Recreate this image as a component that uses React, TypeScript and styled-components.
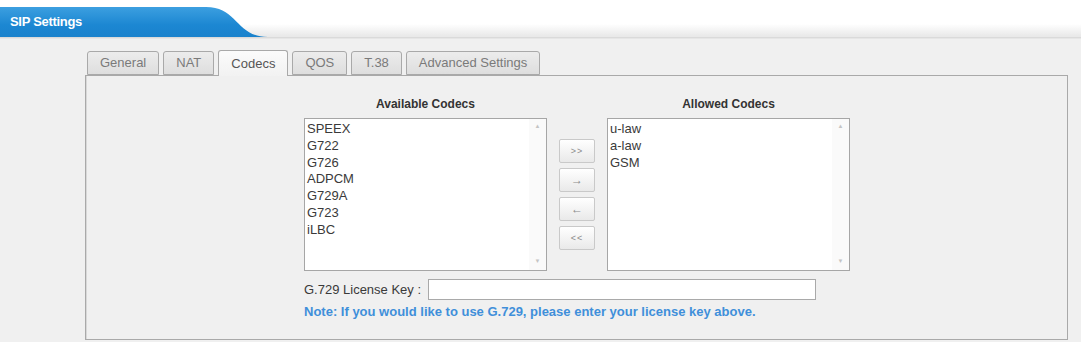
import * as React from 'react';
import styled, { createGlobalStyle } from 'styled-components';

const GlobalStyle = createGlobalStyle`
  html, body {
    margin: 0;
    padding: 0;
    background: #f0f0f0;
    font-family: 'Liberation Sans', Arial, sans-serif;
  }
`;

const tabs = ['General', 'NAT', 'Codecs', 'QOS', 'T.38', 'Advanced Settings'];
const available = ['SPEEX', 'G722', 'G726', 'ADPCM', 'G729A', 'G723', 'iLBC'];
const allowed = ['u-law', 'a-law', 'GSM'];
const moves = ['>>', '\u2192', '\u2190', '<<'];

function CodecList({ items }: { items: string[] }) {
  return (
    <ListBox>
      <ListItems>
        {items.map((item) => (
          <div key={item}>{item}</div>
        ))}
      </ListItems>
      <ScrollTrack>
        <span>&#9650;</span>
        <span>&#9660;</span>
      </ScrollTrack>
    </ListBox>
  );
}

export default function App() {
  return (
    <Page>
      <GlobalStyle />
      <HeaderBar>
        <TitleTab>SIP Settings</TitleTab>
      </HeaderBar>
      <Body>
        <TabRow>
          {tabs.map((t) => (
            <Tab key={t} $active={t === 'Codecs'}>
              {t}
            </Tab>
          ))}
        </TabRow>
        <Panel>
          <CodecGrid>
            <ColumnTitle>Available Codecs</ColumnTitle>
            <span />
            <ColumnTitle>Allowed Codecs</ColumnTitle>
            <CodecList items={available} />
            <MoveButtons>
              {moves.map((m) => (
                <MoveButton key={m} $small={m.length > 1}>
                  {m}
                </MoveButton>
              ))}
            </MoveButtons>
            <CodecList items={allowed} />
          </CodecGrid>
          <KeyRow>
            <KeyLabel>G.729 License Key :</KeyLabel>
            <KeyInput />
          </KeyRow>
          <Note>Note: If you would like to use G.729, please enter your license key above.</Note>
        </Panel>
      </Body>
    </Page>
  );
}

const Page = styled.div`
  width: 1081px;
  height: 342px;
  overflow: hidden;
  background: #f0f0f0;
`;

const HeaderBar = styled.div`
  height: 38px;
  padding-top: 7px;
  box-sizing: border-box;
  background: linear-gradient(#ffffff 0px, #ffffff 24px, #e9e9e9 36px, #e9e9e9 38px);
  border-bottom: 1px solid #dadada;
  box-shadow: 0 1px 0 #e6e6e6;
`;

const TitleTab = styled.div`
  width: 268px;
  height: 30px;
  padding-left: 10px;
  box-sizing: border-box;
  line-height: 30px;
  color: #fff;
  font-size: 13px;
  font-weight: bold;
  letter-spacing: -0.3px;
  background: linear-gradient(#3c9fe0, #1c87d2 60%, #1a82cc);
  clip-path: path('M0 0 H206 C238 0 236 30 268 30 H0 Z');
`;

const Body = styled.div`
  padding: 11px 13px 0 85px;
`;

const TabRow = styled.div`
  display: flex;
  align-items: flex-end;
  gap: 4px;
  height: 26px;
  padding-left: 2px;
`;

const Tab = styled.div<{ $active?: boolean }>`
  height: ${(p) => (p.$active ? 26 : 24)}px;
  padding: 0 12px;
  box-sizing: border-box;
  border: 1px solid #a9a9a9;
  border-bottom: ${(p) => (p.$active ? 'none' : '1px solid #a9a9a9')};
  border-radius: 3px 3px 0 0;
  margin-bottom: ${(p) => (p.$active ? -1 : 0)}px;
  position: relative;
  z-index: ${(p) => (p.$active ? 1 : 0)};
  background: ${(p) =>
    p.$active ? 'linear-gradient(#fbfbfb, #f2f2f2)' : 'linear-gradient(#ececec, #dedede)'};
  color: ${(p) => (p.$active ? '#555' : '#7a7a7a')};
  font-size: 13px;
  line-height: ${(p) => (p.$active ? 25 : 22)}px;
  white-space: nowrap;
`;

const Panel = styled.div`
  height: 265px;
  box-sizing: border-box;
  border: 1px solid #a9a9a9;
  box-shadow: inset 1px 0 0 #d8d8d8;
  background: #f0f0f0;
  padding: 21px 0 0 218px;
`;

const CodecGrid = styled.div`
  display: grid;
  grid-template-columns: 243px 36px 243px;
  grid-template-rows: 21px 153px;
  column-gap: 12px;
`;

const ColumnTitle = styled.div`
  text-align: center;
  font-size: 12px;
  font-weight: bold;
  line-height: 14px;
  color: #333;
`;

const ListBox = styled.div`
  display: flex;
  border: 1px solid #a6a6a6;
  background: #fff;
`;

const ListItems = styled.div`
  flex: 1;
  padding: 2px 0 0 2px;
  font-size: 13px;
  line-height: 16.8px;
  color: #3a3a3a;
`;

const ScrollTrack = styled.div`
  width: 17px;
  display: flex;
  flex-direction: column;
  justify-content: space-between;
  align-items: center;
  padding: 4px 0 6px;
  background: #fafafa;
  color: #c4c4c4;
  font-size: 6px;
`;

const MoveButtons = styled.div`
  align-self: center;
  display: flex;
  flex-direction: column;
  gap: 5px;
`;

const MoveButton = styled.div<{ $small?: boolean }>`
  height: 24px;
  box-sizing: border-box;
  border: 1px solid #c9c9c9;
  border-radius: 2px;
  background: linear-gradient(#ffffff, #e9e9e9);
  color: #8a8a8a;
  font-size: ${(p) => (p.$small ? 9 : 12)}px;
  line-height: 22px;
  text-align: center;
  letter-spacing: ${(p) => (p.$small ? 1 : 0)}px;
`;

const KeyRow = styled.div`
  display: flex;
  align-items: center;
  gap: 3px;
  margin-top: 8px;
`;

const KeyLabel = styled.span`
  width: 121px;
  font-size: 13px;
  color: #3a3a3a;
  white-space: nowrap;
`;

const KeyInput = styled.div`
  width: 388px;
  height: 21px;
  box-sizing: border-box;
  border: 1px solid #a9a9a9;
  background: #fff;
`;

const Note = styled.div`
  margin-top: 4px;
  font-size: 13px;
  font-weight: bold;
  line-height: 15px;
  color: #3f8fda;
`;
